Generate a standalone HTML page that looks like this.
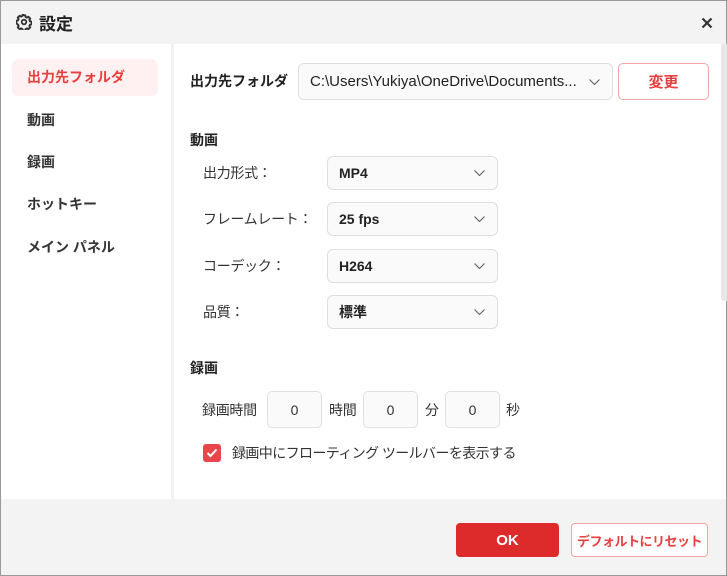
<!DOCTYPE html>
<html><head><meta charset="utf-8"><style>
*{box-sizing:border-box;margin:0;padding:0}
body{width:727px;height:576px;overflow:hidden;font-family:"Liberation Sans","Noto Sans CJK JP",sans-serif;color:#222;background:#fff}
.win{position:absolute;left:0;top:0;width:727px;height:576px;border:1px solid #9a9a9a;background:#fff}
.title{position:absolute;left:0;top:0;width:725px;height:43px;background:#f3f3f3}
.abs{position:absolute;white-space:nowrap}
.side{position:absolute;left:0;top:43px;width:170px;height:455px;background:#fff}
.sep{position:absolute;left:170px;top:43px;width:3px;height:455px;background:#f2f2f2}
.foot{position:absolute;left:0;top:498px;width:725px;height:76px;background:#f3f3f3}
.sel{position:absolute;border:1px solid #dedede;border-radius:6px;background:#fafafa;font-size:14px;color:#222;padding-left:11px;display:flex;align-items:center}
.sel svg{position:absolute;right:12px;top:50%;margin-top:-3px}
.num{position:absolute;width:55px;height:37px;border:1px solid #e0e0e0;border-radius:5px;background:#fafafa;font-size:14px;display:flex;align-items:center;justify-content:center;color:#333}
.lbl{font-size:14px;color:#333;letter-spacing:-0.3px}
.nav{font-size:14px;font-weight:bold;color:#333}
.btn{display:flex;align-items:center;justify-content:center}
</style></head><body><div class="win">
<div class="title"></div>
<svg class="abs" style="left:15px;top:13px" width="16" height="16" viewBox="0 0 16 16"><path d="M8 1.2l1.3.2.4 1.6 1.2.6 1.5-.8 1.8 1.8-.8 1.5.6 1.2 1.6.4v2.6l-1.6.4-.6 1.2.8 1.5-1.8 1.8-1.5-.8-1.2.6-.4 1.6H6.7l-.4-1.6-1.2-.6-1.5.8-1.8-1.8.8-1.5-.6-1.2L.4 9.3V6.7L2 6.3l.6-1.2-.8-1.5 1.8-1.8 1.5.8 1.2-.6.4-1.6z" fill="none" stroke="#333" stroke-width="2" stroke-linejoin="round"/><circle cx="8" cy="8" r="2.3" fill="none" stroke="#333" stroke-width="1.8"/></svg>
<div class="abs" style="left:38px;top:9px;font-size:17px;font-weight:bold;color:#222">設定</div>
<svg class="abs" style="left:700px;top:16px" width="12" height="12" viewBox="0 0 12 12"><path d="M1.5 1.5l9 9M10.5 1.5l-9 9" stroke="#333" stroke-width="2.2"/></svg>
<div class="side"></div><div class="sep"></div>
<div class="abs" style="left:11px;top:58px;width:146px;height:37px;background:#fff1f1;border-radius:7px"></div>
<div class="abs nav" style="left:26px;top:66px;color:#e8403f">出力先フォルダ</div>
<div class="abs nav" style="left:26px;top:109px">動画</div>
<div class="abs nav" style="left:26px;top:151px">録画</div>
<div class="abs nav" style="left:26px;top:193px">ホットキー</div>
<div class="abs nav" style="left:26px;top:236px">メイン パネル</div>
<div class="abs" style="left:720px;top:43px;width:6px;height:257px;background:#e8e8e8;border-radius:0 0 0 3px"></div>
<div class="abs" style="left:189px;top:70px;font-size:14px;font-weight:bold">出力先フォルダ</div>
<div class="sel" style="left:297px;top:62px;width:315px;height:37px;font-size:15px">C:\Users\Yukiya\OneDrive\Documents...<svg width="11" height="6" viewBox="0 0 11 6"><path d="M.5.5l5 5 5-5" fill="none" stroke="#666" stroke-width="1.2"/></svg></div>
<div class="abs btn" style="left:617px;top:62px;width:91px;height:37px;border:1px solid #f5a5a5;border-radius:5px;background:#fff;color:#e8403f;font-size:15px;font-weight:bold">変更</div>
<div class="abs" style="left:189px;top:129px;font-size:14px;font-weight:bold">動画</div>
<div class="abs lbl" style="left:202px;top:162px">出力形式：</div>
<div class="abs lbl" style="left:202px;top:208px">フレームレート：</div>
<div class="abs lbl" style="left:202px;top:255px">コーデック：</div>
<div class="abs lbl" style="left:202px;top:301px">品質：</div>
<div class="sel" style="left:326px;top:155px;width:171px;height:34px;font-weight:bold">MP4<svg width="11" height="6" viewBox="0 0 11 6"><path d="M.5.5l5 5 5-5" fill="none" stroke="#666" stroke-width="1.2"/></svg></div>
<div class="sel" style="left:326px;top:201px;width:171px;height:34px;font-weight:bold">25 fps<svg width="11" height="6" viewBox="0 0 11 6"><path d="M.5.5l5 5 5-5" fill="none" stroke="#666" stroke-width="1.2"/></svg></div>
<div class="sel" style="left:326px;top:248px;width:171px;height:34px;font-weight:bold">H264<svg width="11" height="6" viewBox="0 0 11 6"><path d="M.5.5l5 5 5-5" fill="none" stroke="#666" stroke-width="1.2"/></svg></div>
<div class="sel" style="left:326px;top:294px;width:171px;height:34px;font-weight:bold">標準<svg width="11" height="6" viewBox="0 0 11 6"><path d="M.5.5l5 5 5-5" fill="none" stroke="#666" stroke-width="1.2"/></svg></div>
<div class="abs" style="left:189px;top:357px;font-size:14px;font-weight:bold">録画</div>
<div class="abs lbl" style="left:201px;top:399px">録画時間</div>
<div class="num" style="left:266px;top:390px">0</div>
<div class="abs lbl" style="left:328px;top:399px">時間</div>
<div class="num" style="left:362px;top:390px">0</div>
<div class="abs lbl" style="left:424px;top:399px">分</div>
<div class="num" style="left:444px;top:390px">0</div>
<div class="abs lbl" style="left:505px;top:399px">秒</div>
<div class="abs" style="left:202px;top:443px;width:18px;height:18px;background:#e8464a;border-radius:3px"></div>
<svg class="abs" style="left:205px;top:447px" width="12" height="10" viewBox="0 0 12 10"><path d="M1.5 5l3 3 6-6.5" fill="none" stroke="#fff" stroke-width="2"/></svg>
<div class="abs" style="left:231px;top:442px;font-size:14px;letter-spacing:-0.6px;color:#333">録画中にフローティング ツールバーを表示する</div>
<div class="foot"></div>
<div class="abs btn" style="left:455px;top:522px;width:103px;height:34px;background:#dd2a2a;border-radius:4px;color:#fff;font-weight:bold;font-size:15px">OK</div>
<div class="abs btn" style="left:570px;top:522px;width:137px;height:34px;border:1px solid #f5a5a5;border-radius:4px;background:#fff;color:#e8403f;font-weight:bold;font-size:13px;letter-spacing:-0.5px">デフォルトにリセット</div>
</div></body></html>
